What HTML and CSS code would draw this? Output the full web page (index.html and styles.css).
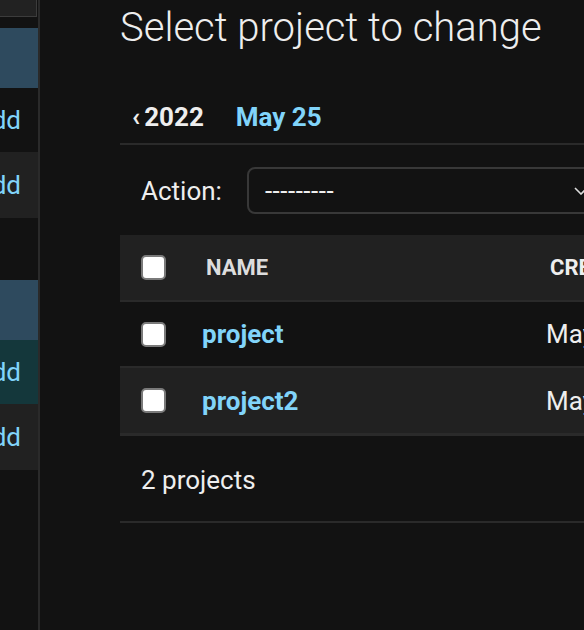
FILE: index.html
```html
<!DOCTYPE html>
<html lang="en">
<head>
<meta charset="utf-8">
<title>Select project to change</title>
<link rel="stylesheet" href="styles.css">
</head>
<body>
<nav class="sidebar">
  <div class="nav-filter"></div>
  <div class="module">
    <div class="caption"></div>
    <div class="nav-row"><a class="addlink" href="#">Add</a></div>
    <div class="nav-row alt"><a class="addlink" href="#">Add</a></div>
  </div>
  <div class="module second">
    <div class="caption"></div>
    <div class="nav-row current"><a class="addlink" href="#">Add</a></div>
    <div class="nav-row alt"><a class="addlink" href="#">Add</a></div>
  </div>
</nav>
<main class="content">
  <h1 class="title">Select project to change</h1>
  <div class="date-hierarchy">
    <a class="back" href="#"><span class="lsaquo">&lsaquo;</span>2022</a>
    <span class="current-date">May 25</span>
  </div>
  <div class="actions">
    <label class="action-label">Action:</label>
    <div class="select">
      <span class="dashes">---------</span>
      <svg class="chevron" width="14" height="8" viewBox="0 0 14 8"><polyline points="1,1 7,7 13,1" fill="none" stroke="#dcdcdc" stroke-width="1.6"/></svg>
    </div>
  </div>
  <table class="result-list">
    <thead>
      <tr>
        <th class="col-check"><input type="checkbox" class="cb"></th>
        <th class="col-name">Name</th>
        <th class="col-created">Created</th>
      </tr>
    </thead>
    <tbody>
      <tr class="row1">
        <td class="col-check"><input type="checkbox" class="cb"></td>
        <td class="col-name"><a href="#">project</a></td>
        <td class="col-created">May 25, 2022, 10:12 a.m.</td>
      </tr>
      <tr class="row2">
        <td class="col-check"><input type="checkbox" class="cb"></td>
        <td class="col-name"><a href="#">project2</a></td>
        <td class="col-created">May 25, 2022, 10:14 a.m.</td>
      </tr>
    </tbody>
  </table>
  <p class="paginator">2 projects</p>
</main>
</body>
</html>
```
FILE: styles.css
```css
html, body {
  margin: 0;
  padding: 0;
  background: #121212;
  height: 100%;
}
body {
  display: flex;
  overflow: hidden;
  width: 584px;
  font-family: Roboto, "Liberation Sans", Arial, sans-serif;
  color: #eeeeee;
}
a { text-decoration: none; }

.sidebar {
  flex: none;
  width: 38px;
  border-right: 2px solid #2a2a2a;
  min-height: 630px;
  overflow: hidden;
}
.nav-filter {
  width: 36px;
  height: 16px;
  background: #222222;
  border-right: 1px solid #3c3c3c;
  border-bottom: 1px solid #3c3c3c;
}
.module { margin-top: 11px; }
.module.second { margin-top: 62px; }
.caption {
  height: 60px;
  background: #2e4a5e;
}
.nav-row {
  height: 64px;
  display: flex;
  align-items: center;
  justify-content: flex-end;
  padding-right: 17px;
  overflow: hidden;
  white-space: nowrap;
}
.nav-row.alt { height: 66px; background: #212121; }
.nav-row.current { background: #14373b; }
.addlink {
  color: #81d4fa;
  font-size: 26px;
}

.content {
  flex: none;
  width: 1000px;
  padding-left: 80px;
}
.title {
  margin: 4px 0 0;
  font-size: 40px;
  font-weight: 300;
  line-height: 48px;
  color: #eeeeee;
}
.date-hierarchy {
  margin-top: 50px;
  padding: 0 0 10px 12px;
  border-bottom: 2px solid #2a2a2a;
  font-size: 26px;
  font-weight: 700;
  line-height: 31px;
  display: flex;
  gap: 32px;
}
.back { color: #eeeeee; }
.lsaquo { margin-right: 4px; }
.current-date { color: #81d4fa; }

.actions {
  display: flex;
  align-items: center;
  padding: 22px 0 21px 21px;
  font-size: 26px;
}
.action-label { margin-right: 25px; color: #eeeeee; }
.select {
  box-sizing: border-box;
  width: 355px;
  height: 47px;
  border: 2px solid #383838;
  border-radius: 8px;
  display: flex;
  align-items: center;
  justify-content: space-between;
  padding: 0 12px 0 16px;
  color: #eeeeee;
}
.dashes { font-size: 26px; letter-spacing: 0.5px; }
.chevron { display: block; }

.result-list {
  border-collapse: collapse;
  width: 900px;
}
.result-list th, .result-list td {
  text-align: left;
  vertical-align: middle;
  padding: 0;
}
thead th {
  background: #212121;
  height: 65px;
  border-bottom: 2px solid #2a2a2a;
  font-size: 22px;
  font-weight: 700;
  text-transform: uppercase;
  color: #dddddd;
}
tbody td {
  height: 64px;
  border-bottom: 2px solid #2a2a2a;
  font-size: 26px;
}
.row2 td { background: #212121; height: 65px; border-bottom-width: 3px; }
.col-check { width: 66px; padding-left: 21px !important; box-sizing: border-box; }
thead .col-name, thead .col-created { padding-left: 20px !important; }
tbody .col-name, tbody .col-created { padding-left: 16px !important; }
.col-name { width: 344px; box-sizing: border-box; }
.col-name a { color: #81d4fa; font-weight: 700; }
.col-created { color: #eeeeee; white-space: nowrap; }
.cb {
  appearance: none;
  -webkit-appearance: none;
  display: block;
  margin: 0;
  width: 25px;
  height: 25px;
  box-sizing: border-box;
  background: #ffffff;
  border: 2px solid #7a7a7a;
  border-radius: 5px;
}

.paginator {
  margin: 0;
  padding: 29px 0 25px 21px;
  font-size: 26px;
  line-height: 31px;
  border-bottom: 2px solid #2a2a2a;
  color: #eeeeee;
}
```
